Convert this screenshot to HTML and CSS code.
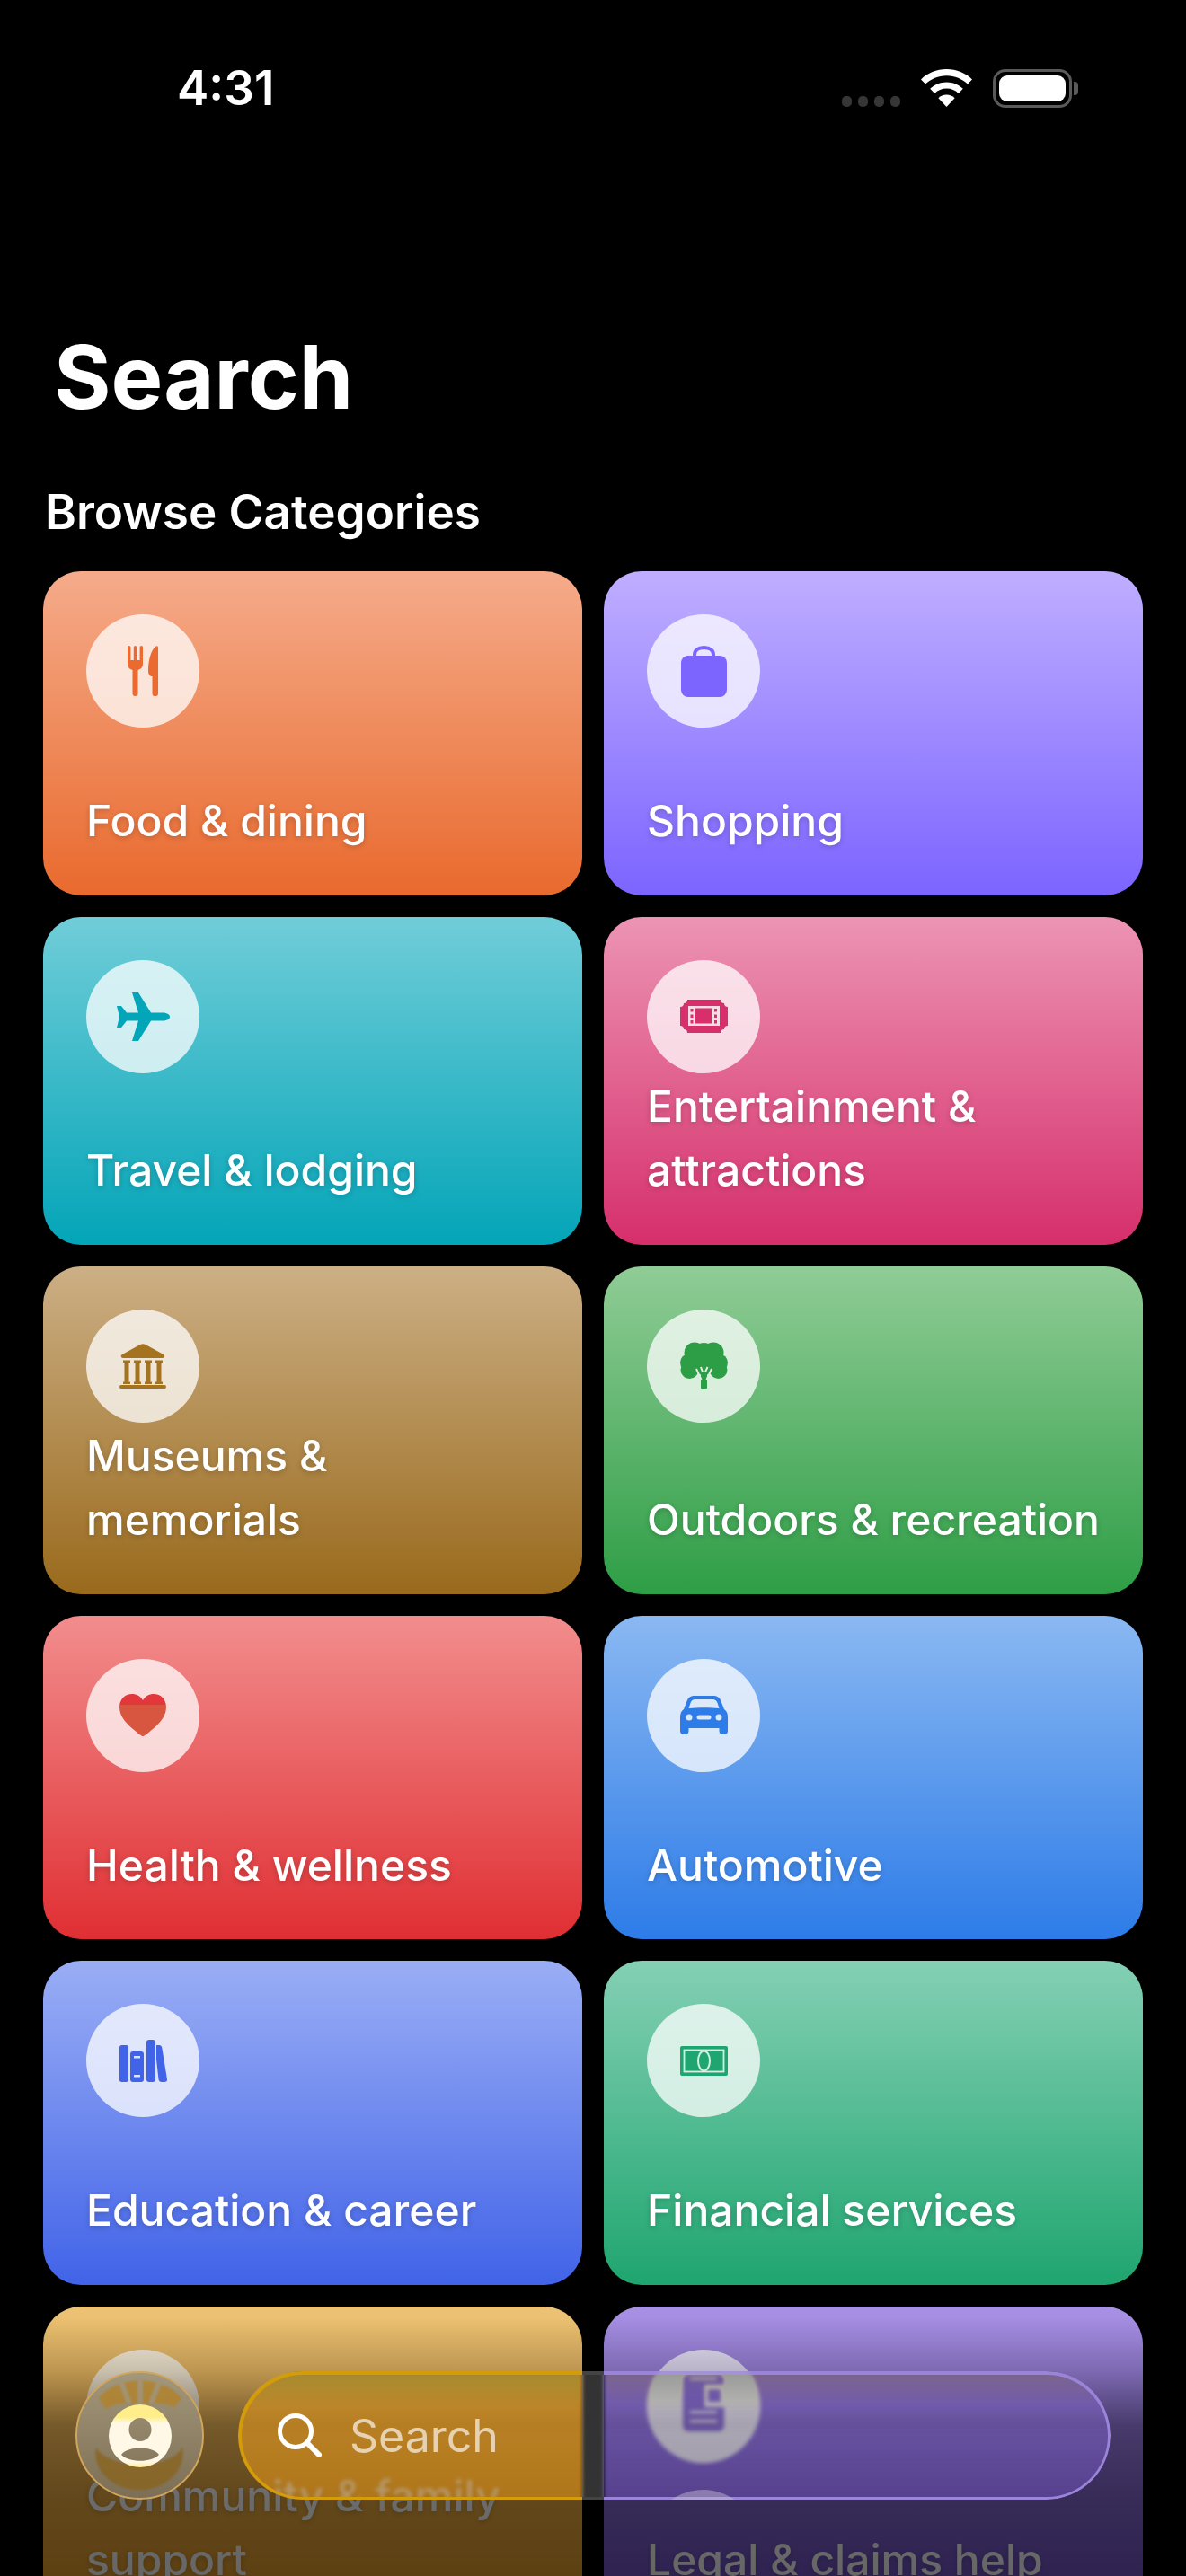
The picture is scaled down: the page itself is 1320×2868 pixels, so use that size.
FILE: index.html
```html
<!DOCTYPE html>
<html>
<head>
    <meta charset="utf-8">
    <title>Search</title>
    <link rel="stylesheet" href="styles.css">
</head>
<body>
    <div class="screen">
        <div class="status-bar">
            <span class="status-time">4:31</span>
            <div class="status-icons">
                <div class="signal-dots"><i></i><i></i><i></i><i></i></div>
                <svg class="wifi-icon" viewBox="0 0 57 42" width="57" height="42">
                    <path d="M28.5 0C39.6 0 49.7 4.3 57 11.4L52 16.6C46 10.8 37.7 7.2 28.5 7.2S11 10.8 5 16.6L0 11.4C7.3 4.3 17.4 0 28.5 0Z" fill="#fff"/>
                    <path d="M28.5 14.4C35.6 14.4 42 17.2 46.8 21.7L41.8 26.9C38.3 23.6 33.6 21.6 28.5 21.6S18.7 23.6 15.2 26.9L10.2 21.7C15 17.2 21.4 14.4 28.5 14.4Z" fill="#fff"/>
                    <path d="M28.5 28.6C32 28.6 35.2 30 37.6 32.2L28.5 42L19.4 32.2C21.8 30 25 28.6 28.5 28.6Z" fill="#fff"/>
                </svg>
                <div class="battery">
                    <div class="battery-body"><div class="battery-fill"></div></div>
                    <div class="battery-cap"></div>
                </div>
            </div>
        </div>

        <h1 class="page-title">Search</h1>
        <h2 class="section-title">Browse Categories</h2>

        <div class="category-grid">
            <div class="category-card food">
                <div class="category-icon">
                    <svg viewBox="0 0 34 56" width="34" height="56">
                        <rect x="0" y="0" width="3.4" height="18" rx="1.7"/>
                        <rect x="6.8" y="0" width="3.4" height="18" rx="1.7"/>
                        <rect x="13.6" y="0" width="3.4" height="18" rx="1.7"/>
                        <path d="M0 16H17V20C17 24 14.500 26 11.500 27V53A3 3 0 0 1 5.500 53V27C2.500 26 0 24 0 20Z"/>
                        <path d="M34 2V53A3.200 3.200 0 0 1 27.500 53V34H26C24 33 23 31 23 28C23 16 26 5 31 1C32.300 0 34 0 34 2Z"/>
                    </svg>
                </div>
                <div class="category-name">Food &amp; dining</div>
            </div>
            <div class="category-card shopping">
                <div class="category-icon">
                    <svg viewBox="0 0 51 57" width="51" height="57">
                        <path d="M15 14V10C15 5 19 2 25.500 2S36 5 36 10V14" fill="none" stroke="currentColor" stroke-width="4"/>
                        <rect x="0" y="11" width="51" height="46" rx="8"/>
                    </svg>
                </div>
                <div class="category-name">Shopping</div>
            </div>
            <div class="category-card travel">
                <div class="category-icon">
                    <svg viewBox="0 0 59 56" width="59" height="56">
                        <path d="M59 28C59 25 55 23.500 51 23.500H38L24 1H17L24 23.500H11L5 16H0L3 28L0 40H5L11 32.500H24L17 55H24L38 32.500H51C55 32.500 59 31 59 28Z"/>
                    </svg>
                </div>
                <div class="category-name">Travel &amp; lodging</div>
            </div>
            <div class="category-card entertainment">
                <div class="category-icon">
                    <svg viewBox="0 0 53 37" width="53" height="37">
                        <path d="M8 0H45A4 4 0 0 0 49 4A4 4 0 0 0 53 8V29A4 4 0 0 0 49 33A4 4 0 0 0 45 37H8A4 4 0 0 0 4 33A4 4 0 0 0 0 29V8A4 4 0 0 0 4 4A4 4 0 0 0 8 0Z"/>
                        <path fill-rule="evenodd" fill="#f8dbe5" d="M9 7H44V29H9ZM17 9.500V26.500H35V9.500ZM11.500 10V13.500H14.500V10ZM11.500 16.500V20H14.500V16.500ZM11.500 23V26.500H14.500V23ZM38 10V13.500H41V10ZM38 16.500V20H41V16.500ZM38 23V26.500H41V23Z"/>
                    </svg>
                </div>
                <div class="category-name">Entertainment &amp; attractions</div>
            </div>
            <div class="category-card museums">
                <div class="category-icon">
                    <svg viewBox="0 0 52 50" width="52" height="50">
                        <path d="M23.500 0.700C25 0 27 0 28.500 0.700L49 12C51 13 50.500 16 48 16H4C1.500 16 1 13 3 12Z"/>
                        <path d="M4 18.500H12V21H10.500V42.500H12V45H4V42.500H5.500V21H4Z"/>
                        <path d="M16 18.500H24V21H22.500V42.500H24V45H16V42.500H17.500V21H16Z"/>
                        <path d="M28 18.500H36V21H34.500V42.500H36V45H28V42.500H29.500V21H28Z"/>
                        <path d="M40 18.500H48V21H46.500V42.500H48V45H40V42.500H41.500V21H40Z"/>
                        <rect x="0" y="46" width="52" height="4" rx="2"/>
                    </svg>
                </div>
                <div class="category-name">Museums &amp; memorials</div>
            </div>
            <div class="category-card outdoors">
                <div class="category-icon">
                    <svg viewBox="0 0 53 53" width="53" height="53">
                        <circle cx="16" cy="12" r="11.500"/>
                        <circle cx="37" cy="12" r="11.500"/>
                        <circle cx="26.500" cy="14" r="13"/>
                        <circle cx="9.500" cy="23" r="9.500"/>
                        <circle cx="43.500" cy="23" r="9.500"/>
                        <circle cx="10.500" cy="31" r="10"/>
                        <circle cx="42.500" cy="31" r="10"/>
                        <circle cx="26.500" cy="22" r="15"/>
                        <rect x="23" y="30" width="7" height="23" rx="2"/>
                        <path d="M18 30L23.500 42M35 30L29.500 42M23 28L25 33.500M30.500 28L28 33.500" fill="none" stroke="#dcefe2" stroke-width="2"/>
                    </svg>
                </div>
                <div class="category-name">Outdoors &amp; recreation</div>
            </div>
            <div class="category-card health">
                <div class="category-icon">
                    <svg viewBox="0 0 52 47" width="52" height="47">
                        <defs>
                            <linearGradient id="heartFill" x1="0" y1="0" x2="0" y2="1">
                                <stop offset="0.26" stop-color="#e2383c"/>
                                <stop offset="0.26" stop-color="#d8563f"/>
                            </linearGradient>
                        </defs>
                        <path fill="url(#heartFill)" d="M26 47C24.500 47 22 45 15 39C6 31.500 0 24 0 14.500C0 6 6 0 14 0C19 0 23.500 2.500 26 7C28.500 2.500 33 0 38 0C46 0 52 6 52 14.500C52 24 46 31.500 37 39C30 45 27.500 47 26 47Z"/>
                    </svg>
                </div>
                <div class="category-name">Health &amp; wellness</div>
            </div>
            <div class="category-card automotive">
                <div class="category-icon">
                    <svg viewBox="0 0 53 43" width="53" height="43">
                        <path fill-rule="evenodd" d="M16 0H37C42 0 44 2.500 45.500 6L49 15C52 17 53 20 53 24V39C53 41.500 51.500 43 49.500 43H47C45 43 43.500 41.500 43.500 39V36H9.500V39C9.500 41.500 8 43 6 43H3.500C1.500 43 0 41.500 0 39V24C0 20 1 17 4 15L7.500 6C9 2.500 11 0 16 0ZM17 4C14 4 12.500 5.500 11.500 8L9.500 14C20 13 33 13 43.500 14L41.500 8C40.500 5.500 39 4 36 4ZM10 20.500A3.500 3.500 0 1 0 10 27.500A3.500 3.500 0 1 0 10 20.500ZM43 20.500A3.500 3.500 0 1 0 43 27.500A3.500 3.500 0 1 0 43 20.500ZM21 21.500A2.500 2.500 0 0 0 21 26.500H32A2.500 2.500 0 0 0 32 21.500Z"/>
                    </svg>
                </div>
                <div class="category-name">Automotive</div>
            </div>
            <div class="category-card education">
                <div class="category-icon">
                    <svg viewBox="0 0 53 47" width="53" height="47">
                        <rect x="0" y="6" width="10" height="41" rx="2.500"/>
                        <path fill-rule="evenodd" d="M15 13H24A3 3 0 0 1 27 16V44A3 3 0 0 1 24 47H15A3 3 0 0 1 12 44V16A3 3 0 0 1 15 13ZM16 18V20.500H23V18ZM16 39V41.500H23V39Z"/>
                        <rect x="30" y="0" width="10" height="47" rx="3"/>
                        <path d="M41 6H44C46 6 47 7 47.300 9L53 44C53.300 46 52 47 50 47H47C45 47 43.800 46 43.500 44L41 22Z"/>
                    </svg>
                </div>
                <div class="category-name">Education &amp; career</div>
            </div>
            <div class="category-card financial">
                <div class="category-icon">
                    <svg viewBox="0 0 53 33" width="53" height="33">
                        <rect x="0" y="0" width="53" height="33" rx="2"/>
                        <rect x="4.500" y="4.500" width="44" height="24" fill="none" stroke="#d6efe5" stroke-width="1.800"/>
                        <ellipse cx="26.500" cy="16.500" rx="6.500" ry="11" fill="none" stroke="#d6efe5" stroke-width="2"/>
                    </svg>
                </div>
                <div class="category-name">Financial services</div>
            </div>
            <div class="category-card community">
                <div class="category-icon">
                    <svg viewBox="0 0 60 50" width="60" height="50">
                        <circle cx="30" cy="12" r="10"/>
                        <circle cx="9" cy="18" r="7"/>
                        <circle cx="51" cy="18" r="7"/>
                        <path d="M12 50C12 34 20 25 30 25S48 34 48 50Z"/>
                    </svg>
                </div>
                <div class="category-name">Community &amp; family support</div>
            </div>
            <div class="category-card legal">
                <div class="category-icon">
                    <svg class="legal-icon" viewBox="0 0 46 64" width="46" height="64">
                        <path fill-rule="evenodd" d="M6 0H40A6 6 0 0 1 46 6V58A6 6 0 0 1 40 64H6A6 6 0 0 1 0 58V6A6 6 0 0 1 6 0ZM8 4V6.500H38V4ZM24 12V37H46V12ZM8 41V44H38V41ZM8 51V54H38V51Z"/>
                        <rect x="28" y="17" width="14" height="14"/>
                    </svg>
                </div>
                <div class="category-name">Legal &amp; claims help</div>
            </div>
        </div>

        <!-- Dark fade behind the floating search bar -->
        <div class="bottom-fade"></div>

        <div class="search-dock">
            <div class="avatar-button">
                <svg class="avatar-glass" viewBox="0 0 143 143" width="143" height="143">
                    <path d="M26 30C46 4 97 4 118 30L110 40C98 34 88 36 71 36S46 34 34 42Z" fill="#b5801e"/>
                    <path d="M50 10L60 36M72 8V36M94 10L84 36" stroke="#a39474" stroke-width="6"/>
                    <path d="M23 85C38 110 105 110 119 85C124 110 100 132 71 132S18 110 23 85Z" fill="#8a6118"/>
                </svg>
                <svg class="avatar-icon" viewBox="0 0 70 70" width="70" height="70">
                    <defs>
                        <linearGradient id="avatarFill" x1="0" y1="0" x2="0" y2="1">
                            <stop offset="0.2" stop-color="#ffee8a"/>
                            <stop offset="0.3" stop-color="#fff8e6"/>
                            <stop offset="0.92" stop-color="#fff8e6"/>
                            <stop offset="1" stop-color="#ffee8a"/>
                        </linearGradient>
                    </defs>
                    <path fill="url(#avatarFill)" fill-rule="evenodd" d="M35 0A35 35 0 1 1 35 70A35 35 0 1 1 35 0ZM35 15A12.500 13 0 1 0 35 41A12.500 13 0 1 0 35 15ZM14 56C22 65 48 65 56 56C50 46 20 46 14 56Z"/>
                </svg>
            </div>
            <div class="search-pill">
                <div class="pill-circle"></div>
                <div class="pill-echo"></div>
                <svg class="search-icon" viewBox="0 0 49 49" width="49" height="49">
                    <circle cx="20" cy="20" r="17.500" fill="none" stroke="#fff" stroke-width="5"/>
                    <path d="M33 33L46 46" stroke="#fff" stroke-width="6" stroke-linecap="round"/>
                </svg>
                <span class="search-placeholder">Search</span>
            </div>
        </div>
    </div>
</body>
</html>
```

FILE: styles.css
```css
body {
    margin: 0;
    padding: 0;
    background: #000;
    font-family: "Inter", "Liberation Sans", sans-serif;
    color: #fff;
}

.screen {
    position: relative;
    width: 1320px;
    height: 2868px;
    overflow: hidden;
    background: #000;
}

/* Status bar */
.status-bar {
    height: 196px;
    box-sizing: border-box;
    padding: 0 120px 0 197px;
    display: flex;
    justify-content: space-between;
    align-items: center;
}

.status-time {
    font-size: 53px;
    font-weight: 600;
    line-height: 1;
}

.status-icons {
    display: flex;
    align-items: center;
    gap: 23px;
}

.signal-dots {
    display: flex;
    gap: 7px;
    align-self: flex-end;
    margin-bottom: 1px;
}

.signal-dots i {
    display: block;
    width: 11px;
    height: 12px;
    border-radius: 5px;
    background: #363636;
}

.wifi-icon {
    display: block;
}

.battery {
    display: flex;
    align-items: center;
    gap: 2px;
}

.battery-body {
    box-sizing: border-box;
    width: 88px;
    height: 43px;
    padding: 4px;
    border: 3px solid #5a5a5a;
    border-radius: 14px;
}

.battery-fill {
    height: 100%;
    background: #fff;
    border-radius: 9px;
}

.battery-cap {
    width: 5px;
    height: 15px;
    background: #5a5a5a;
    border-radius: 0 4px 4px 0;
}

/* Headings */
.page-title {
    margin: 164px 0 0 60px;
    font-size: 97px;
    font-weight: 700;
    line-height: 120px;
}

.section-title {
    margin: 58px 0 0 50px;
    font-size: 53px;
    font-weight: 600;
    line-height: 64px;
}

/* Category cards */
.category-grid {
    margin-top: 34px;
    padding: 0 48px;
    display: grid;
    grid-template-columns: 600px 600px;
    gap: 24px;
}

.category-card {
    box-sizing: border-box;
    min-height: 360.5px;
    padding: 48px;
    border-radius: 42px;
    display: flex;
    flex-direction: column;
    justify-content: space-between;
}

.category-icon {
    width: 126px;
    height: 126px;
    border-radius: 50%;
    background: rgba(255, 255, 255, 0.75);
    display: flex;
    align-items: center;
    justify-content: center;
}

.category-icon svg {
    display: block;
    fill: currentColor;
}

.category-icon .legal-icon {
    margin-bottom: 8px;
}

.category-name {
    padding-top: 1px;
    margin-bottom: -1px;
    font-size: 48px;
    font-weight: 550;
    line-height: 71.5px;
    text-shadow: 0 2px 6px rgba(0, 0, 0, 0.2);
}

.food { background: linear-gradient(#f5ab8a, #e96a2e); }
.food .category-icon { color: #ea6a30; }
.shopping { background: linear-gradient(#bfaeff, #7c64ff); }
.shopping .category-icon { color: #7c64ff; }
.travel { background: linear-gradient(#70cdd8, #03a5b8); }
.travel .category-icon { color: #03a5b8; }
.entertainment { background: linear-gradient(#ec94b4, #d62f6b); }
.entertainment .category-icon { color: #d62f6b; }
.museums { background: linear-gradient(#ccaf85, #996a1c); }
.museums .category-icon { color: #a5721f; }
.outdoors { background: linear-gradient(#90cc96, #2e9e46); }
.outdoors .category-icon { color: #2e9e46; }
.health { background: linear-gradient(#f28d8d, #e02f33); }
.health .category-icon { color: #e02f33; }
.automotive { background: linear-gradient(#8ab8f2, #2d7ce8); }
.automotive .category-icon { color: #2d7ce8; }
.education { background: linear-gradient(#9aaef5, #4163e8); }
.education .category-icon { color: #4163e8; }
.financial { background: linear-gradient(#84d0b4, #1fa56f); }
.financial .category-icon { color: #1fa56f; }
.community { background: linear-gradient(#ecc275, #e89a1e); }
.community .category-icon { color: #e0a02e; }
.legal { background: linear-gradient(#a891e4, #6a49c4); }
.legal .category-icon { color: #6a49c4; }

/* Fade over the last row */
.bottom-fade {
    position: absolute;
    left: 0;
    right: 0;
    top: 2580px;
    bottom: 0;
    background: linear-gradient(rgba(0, 0, 0, 0) 0, rgba(0, 0, 0, 0.2) 60px, rgba(0, 0, 0, 0.5) 120px, rgba(0, 0, 0, 0.58) 200px, rgba(0, 0, 0, 0.6) 288px);
}

/* Floating search bar */
.search-dock {
    position: absolute;
    left: 84px;
    top: 2640px;
    display: flex;
    gap: 38px;
}

.avatar-button {
    position: relative;
    box-sizing: border-box;
    width: 143px;
    height: 143px;
    border-radius: 50%;
    border: 2px solid #d0a55c;
    overflow: hidden;
    background: linear-gradient(#a3977c, #8f8266 50%, #7d6f55);
    display: flex;
    align-items: center;
    justify-content: center;
}

.avatar-glass {
    position: absolute;
    left: -2px;
    top: -2px;
    opacity: 0.7;
    filter: blur(1px);
}

.avatar-icon {
    position: relative;
    display: block;
}

.search-pill {
    position: relative;
    box-sizing: border-box;
    width: 971px;
    height: 143px;
    padding-left: 44px;
    border-radius: 72px;
    overflow: hidden;
    display: flex;
    align-items: center;
    gap: 31px;
    background:
        linear-gradient(to right, rgba(205, 130, 15, 0.42) 383px, rgba(255, 255, 255, 0.2) 383px, rgba(255, 255, 255, 0.2) 407px, transparent 407px),
        linear-gradient(rgba(0, 0, 0, 0.46), rgba(0, 0, 0, 0.2) 50%, rgba(0, 0, 0, 0.14));
    backdrop-filter: blur(2px) brightness(1.8) saturate(1.12);
}

.search-pill::before {
    content: "";
    position: absolute;
    inset: 0;
    padding: 3.5px;
    border-radius: 72px;
    background: linear-gradient(to right, #d39c08 383px, #444 383px, #444 407px, #9a84da 407px);
    -webkit-mask: linear-gradient(#000 0 0) content-box, linear-gradient(#000 0 0);
    -webkit-mask-composite: xor;
    mask-composite: exclude;
}

/* Lifts the icon circle seen through the glass */
.pill-circle {
    position: absolute;
    left: 455px;
    top: -24px;
    width: 126px;
    height: 126px;
    border-radius: 50%;
    background: rgba(200, 200, 190, 0.22);
    filter: blur(2px);
}

.pill-echo {
    position: absolute;
    left: 456px;
    top: 132px;
    width: 123px;
    height: 123px;
    border-radius: 50%;
    background: rgba(200, 195, 210, 0.45);
}

.search-icon {
    display: block;
    flex: none;
}

.search-placeholder {
    font-size: 50px;
    line-height: 1;
    color: rgba(255, 255, 255, 0.65);
}
```
